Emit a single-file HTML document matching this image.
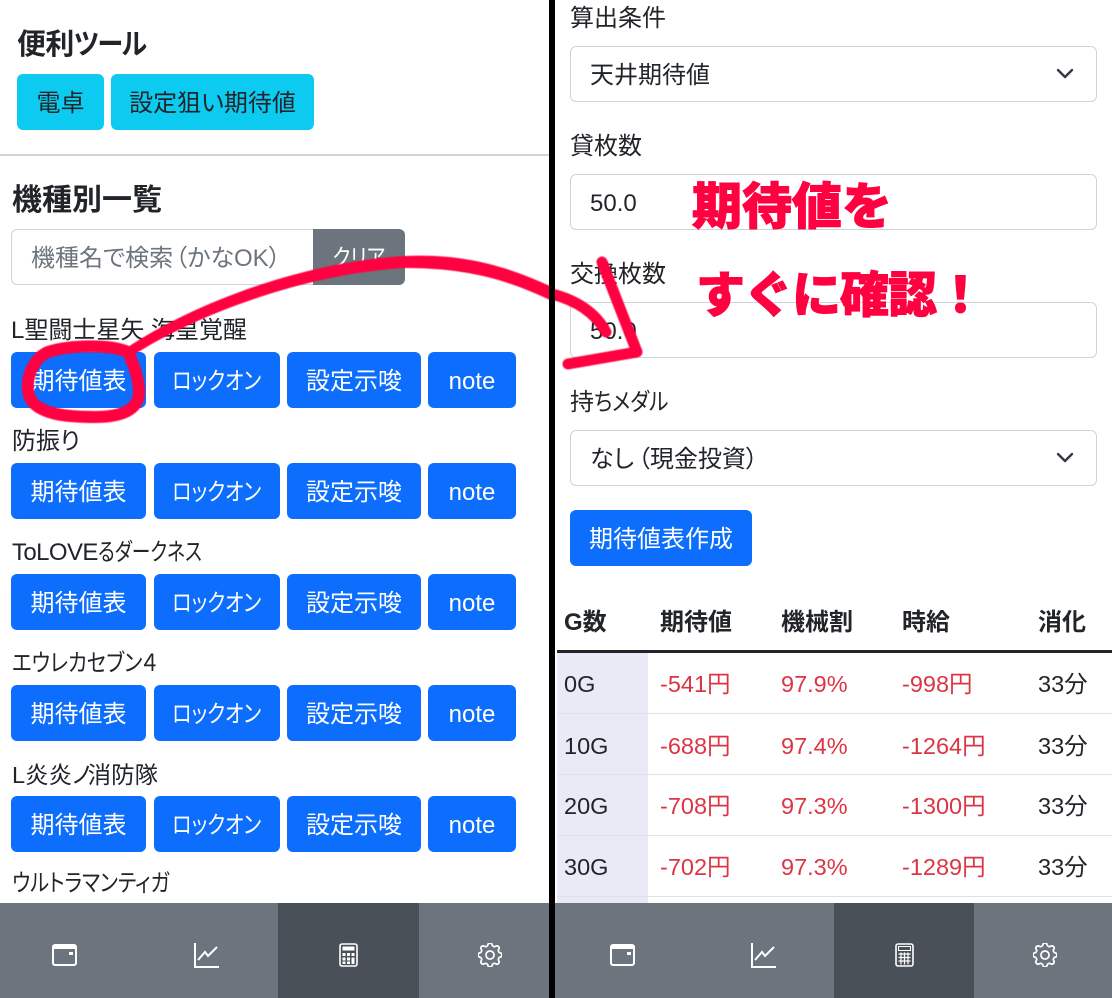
<!DOCTYPE html>
<html lang="ja"><head><meta charset="utf-8"><title>期待値</title>
<style>
html,body{margin:0;padding:0;background:#fff}
body{width:1112px;height:998px;position:relative;overflow:hidden;font-family:"Liberation Sans","Noto Sans CJK JP",sans-serif;color:#212529;font-feature-settings:"palt"}
.a{position:absolute;white-space:nowrap}
.t{position:absolute;white-space:nowrap;font-size:24px;line-height:30px;margin-top:-13px;transform-origin:left center}
.k{display:inline-block;transform:scaleX(.83)}
.kl{display:inline-block;transform:scaleX(.86);transform-origin:left center}
.b{position:absolute;height:56px;line-height:60px;border-radius:6px;text-align:center;background:#0d6efd;color:#fff;font-size:24px}
.c{background:#0dcaf0;color:#212529}
.h{position:absolute;font-size:30px;font-weight:700;line-height:36px;white-space:nowrap}
.f{position:absolute;left:570px;width:525px;height:54px;border:1px solid #ced4da;border-radius:6px;background:#fff;line-height:57px;font-size:24px;text-indent:19px}
.n{position:absolute;top:903px;height:95px}
.gray{background:#6c757d}.dark{background:#495057}
.th{position:absolute;font-weight:700;font-size:24px;line-height:30px;top:608px;white-space:nowrap}
.td{position:absolute;font-size:23.5px;line-height:30px;white-space:nowrap}
.r{color:#dc3545}
.l{position:absolute;left:557px;width:555px;height:1px;background:#dee2e6}
svg{position:absolute}
</style></head><body>

<div class="h" style="left:17px;top:27px;font-size:29px;letter-spacing:-.6px">便利<span style="display:inline-block;letter-spacing:-1.500px;transform:scaleX(.9);transform-origin:left center">ツール</span></div>
<div class="b c" style="left:17px;top:74px;width:87px">電卓</div>
<div class="b c" style="left:111px;top:74px;width:203px">設定狙い期待値</div>
<div class="a" style="left:0;top:154px;width:549px;height:2px;background:#d3d3de"></div>
<div class="h" style="left:12px;top:183px">機種別一覧</div>
<div class="a" style="left:11px;top:229px;height:54px;border:1px solid #ced4da;border-right:0;border-radius:6px 0 0 6px;width:301px;line-height:57px;color:#6c757d;font-size:24px;text-indent:19px">機種名で検索<span style="margin-left:2px">（かなOK）</span></div>
<div class="b" style="left:313px;top:229px;width:92px;background:#6c757d;border-radius:0 6px 6px 0"><span class="k">クリア</span></div>

<div class="t" style="left:11px;top:329px">L聖闘士星矢 海皇覚醒</div>
<div class="b" style="left:11px;top:352px;width:135px">期待値表</div><div class="b" style="left:154px;top:352px;width:126px"><span class="k">ロックオン</span></div><div class="b" style="left:287px;top:352px;width:134px">設定示唆</div><div class="b" style="left:428px;top:352px;width:88px">note</div>
<div class="t" style="left:12px;top:440px">防振り</div>
<div class="b" style="left:11px;top:463px;width:135px">期待値表</div><div class="b" style="left:154px;top:463px;width:126px"><span class="k">ロックオン</span></div><div class="b" style="left:287px;top:463px;width:134px">設定示唆</div><div class="b" style="left:428px;top:463px;width:88px">note</div>
<div class="t" style="left:12px;top:551px"><span style="letter-spacing:-.6px">ToLOVE</span><span style="display:inline-block;transform:scaleX(.78);transform-origin:left center">るダークネス</span></div>
<div class="b" style="left:11px;top:574px;width:135px">期待値表</div><div class="b" style="left:154px;top:574px;width:126px"><span class="k">ロックオン</span></div><div class="b" style="left:287px;top:574px;width:134px">設定示唆</div><div class="b" style="left:428px;top:574px;width:88px">note</div>
<div class="t" style="left:12px;top:662px;transform:scaleX(.85)">エウレカセブン４</div>
<div class="b" style="left:11px;top:685px;width:135px">期待値表</div><div class="b" style="left:154px;top:685px;width:126px"><span class="k">ロックオン</span></div><div class="b" style="left:287px;top:685px;width:134px">設定示唆</div><div class="b" style="left:428px;top:685px;width:88px">note</div>
<div class="t" style="left:12px;top:773px;font-size:23.5px">L炎炎<span style="letter-spacing:-3px">ノ</span>消防隊</div>
<div class="b" style="left:11px;top:796px;width:135px">期待値表</div><div class="b" style="left:154px;top:796px;width:126px"><span class="k">ロックオン</span></div><div class="b" style="left:287px;top:796px;width:134px">設定示唆</div><div class="b" style="left:428px;top:796px;width:88px">note</div>
<div class="t" style="left:12px;top:882px;transform:scaleX(.84)">ウルトラマンティガ</div>

<div class="t" style="left:570px;top:17px">算出条件</div>
<div class="f" style="top:46px">天井期待値</div>
<svg style="left:1055px;top:67px" width="20" height="16" viewBox="0 0 20 16"><path d="M3 3l7 7 7-7" fill="none" stroke="#343a40" stroke-width="2.400" stroke-linecap="round" stroke-linejoin="round"/></svg>
<div class="t" style="left:570px;top:145px">貸枚数</div>
<div class="f" style="top:174px">50.0</div>
<div class="t" style="left:570px;top:273px">交換枚数</div>
<div class="f" style="top:302px">50.0</div>
<div class="t" style="left:570px;top:401px">持<span class="kl">ちメダル</span></div>
<div class="f" style="top:430px">なし<span style="margin-left:4px">（現金投資<span style="margin-right:3px">）</span></span></div>
<svg style="left:1055px;top:451px" width="20" height="16" viewBox="0 0 20 16"><path d="M3 3l7 7 7-7" fill="none" stroke="#343a40" stroke-width="2.400" stroke-linecap="round" stroke-linejoin="round"/></svg>
<div class="b" style="left:570px;top:510px;width:182px">期待値表作成</div>

<div class="th" style="left:564px">G数</div><div class="th" style="left:660px">期待値</div><div class="th" style="left:781px">機械割</div><div class="th" style="left:902px">時給</div><div class="th" style="left:1038px">消化</div>
<div class="a" style="left:557px;top:650px;width:555px;height:3px;background:#212529"></div>
<div class="a" style="left:557px;top:653px;width:91px;height:250px;background:#e9eaf6"></div>
<div class="l" style="top:713px"></div><div class="l" style="top:774px"></div><div class="l" style="top:835px"></div><div class="l" style="top:896px"></div>

<div class="td" style="left:564px;top:669px">0G</div><div class="td r" style="left:660px;top:669px">-541円</div><div class="td r" style="left:781px;top:669px">97.9%</div><div class="td r" style="left:902px;top:669px">-998円</div><div class="td" style="left:1038px;top:669px">33分</div>
<div class="td" style="left:564px;top:731px">10G</div><div class="td r" style="left:660px;top:731px">-688円</div><div class="td r" style="left:781px;top:731px">97.4%</div><div class="td r" style="left:902px;top:731px">-1264円</div><div class="td" style="left:1038px;top:731px">33分</div>
<div class="td" style="left:564px;top:791px">20G</div><div class="td r" style="left:660px;top:791px">-708円</div><div class="td r" style="left:781px;top:791px">97.3%</div><div class="td r" style="left:902px;top:791px">-1300円</div><div class="td" style="left:1038px;top:791px">33分</div>
<div class="td" style="left:564px;top:852px">30G</div><div class="td r" style="left:660px;top:852px">-702円</div><div class="td r" style="left:781px;top:852px">97.3%</div><div class="td r" style="left:902px;top:852px">-1289円</div><div class="td" style="left:1038px;top:852px">33分</div>

<div class="n gray" style="left:0;width:278px"></div>
<div class="n dark" style="left:278px;width:141px"></div>
<div class="n gray" style="left:419px;width:130px"></div>
<div class="n gray" style="left:555px;width:279px"></div>
<div class="n dark" style="left:834px;width:140px"></div>
<div class="n gray" style="left:974px;width:138px"></div>

<svg style="left:52px;top:943px" width="25" height="24" viewBox="0 0 25 24" fill="none" stroke="#fff" stroke-width="2"><rect x="1" y="2" width="23" height="20" rx="2"/><path d="M1 4.500h23" stroke-width="3"/><rect x="17" y="9" width="4" height="3" fill="#fff" stroke="none"/></svg>
<svg style="left:194px;top:943px" width="25" height="25" viewBox="0 0 25 25" fill="none" stroke="#fff"><path d="M1 0v24h24" stroke-width="2"/><path d="M4 17l7-8 3 4 9-9" stroke-width="2"/></svg>
<svg style="left:339px;top:943px" width="19" height="24" viewBox="0 0 19 24" fill="none" stroke="#fff" stroke-width="1.600"><rect x="1" y="1" width="17" height="22" rx="2"/><rect x="3.500" y="3.500" width="12" height="4" fill="#fff" stroke="none"/><g fill="#fff" stroke="none"><rect x="3.500" y="10" width="3" height="3"/><rect x="8" y="10" width="3" height="3"/><rect x="12.500" y="10" width="3" height="3"/><rect x="3.500" y="14.500" width="3" height="3"/><rect x="8" y="14.500" width="3" height="3"/><rect x="12.500" y="14.500" width="3" height="6.500"/><rect x="3.500" y="18.500" width="3" height="2.500"/><rect x="8" y="18.500" width="3" height="2.500"/></g></svg>
<svg style="left:478px;top:943px" width="24" height="24" viewBox="0 0 16 16" fill="none" stroke="#fff" stroke-width="1.150"><circle cx="8" cy="8" r="2.700"/><path d="M9.405 1.050c-.413-1.400-2.397-1.400-2.810 0l-.1.340a1.464 1.464 0 0 1-2.105.872l-.31-.17c-1.283-.698-2.686.705-1.987 1.987l.169.311c.446.820.023 1.841-.872 2.105l-.34.100c-1.400.413-1.400 2.397 0 2.810l.34.100a1.464 1.464 0 0 1 .872 2.105l-.17.310c-.698 1.283.705 2.686 1.987 1.987l.311-.169a1.464 1.464 0 0 1 2.105.872l.1.340c.413 1.400 2.397 1.400 2.810 0l.1-.340a1.464 1.464 0 0 1 2.105-.872l.31.170c1.283.698 2.686-.705 1.987-1.987l-.169-.311a1.464 1.464 0 0 1 .872-2.105l.34-.1c1.400-.413 1.400-2.397 0-2.810l-.34-.1a1.464 1.464 0 0 1-.872-2.105l.17-.310c.698-1.283-.705-2.686-1.987-1.987l-.311.169a1.464 1.464 0 0 1-2.105-.872l-.1-.340z"/></svg>

<svg style="left:610px;top:943px" width="25" height="24" viewBox="0 0 25 24" fill="none" stroke="#fff" stroke-width="2"><rect x="1" y="2" width="23" height="20" rx="2"/><path d="M1 4.500h23" stroke-width="3"/><rect x="17" y="9" width="4" height="3" fill="#fff" stroke="none"/></svg>
<svg style="left:751px;top:943px" width="25" height="25" viewBox="0 0 25 25" fill="none" stroke="#fff"><path d="M1 0v24h24" stroke-width="2"/><path d="M4 17l7-8 3 4 9-9" stroke-width="2"/></svg>
<svg style="left:895px;top:943px" width="19" height="24" viewBox="0 0 19 24" fill="none" stroke="#fff" stroke-width="1.600"><rect x="1" y="1" width="17" height="22" rx="2"/><rect x="3.500" y="3.500" width="12" height="4" fill="none" stroke-width="1"/><path d="M3.500 11h12M3.500 14.500h12M3.500 18h12M6 9.500v12M9.500 9.500v12M13 9.500v12" stroke-width="1.200"/></svg>
<svg style="left:1033px;top:943px" width="24" height="24" viewBox="0 0 16 16" fill="none" stroke="#fff" stroke-width="1.150"><circle cx="8" cy="8" r="2.700"/><path d="M9.405 1.050c-.413-1.400-2.397-1.400-2.810 0l-.1.340a1.464 1.464 0 0 1-2.105.872l-.31-.17c-1.283-.698-2.686.705-1.987 1.987l.169.311c.446.820.023 1.841-.872 2.105l-.34.100c-1.400.413-1.400 2.397 0 2.810l.34.100a1.464 1.464 0 0 1 .872 2.105l-.17.310c-.698 1.283.705 2.686 1.987 1.987l.311-.169a1.464 1.464 0 0 1 2.105.872l.1.340c.413 1.400 2.397 1.400 2.810 0l.1-.340a1.464 1.464 0 0 1 2.105-.872l.31.170c1.283.698 2.686-.705 1.987-1.987l-.169-.311a1.464 1.464 0 0 1 .872-2.105l.34-.1c1.400-.413 1.400-2.397 0-2.810l-.34-.1a1.464 1.464 0 0 1-.872-2.105l.17-.310c.698-1.283-.705-2.686-1.987-1.987l-.311.169a1.464 1.464 0 0 1-2.105-.872l-.1-.340z"/></svg>

<svg style="left:0;top:0;filter:blur(.5px)" width="1112" height="998" viewBox="0 0 1112 998" fill="none" stroke="#ff0040" stroke-linecap="round" stroke-linejoin="round">
<path d="M128 352C110 344 70 345 48 352C30 360 24 385 30 398C38 414 65 417 95 417C125 417 140 408 139 390C138 372 130 358 128 352" stroke-width="12"/>
<path d="M125 349C190 305 300 262 405 256C470 253 515 270 552 287L552 301C510 281 470 268 405 268C300 274 190 318 132 356Z" fill="#ff0040" stroke="none"/>
<path d="M552 294C575 300 595 312 606 332" stroke-width="11"/>
<path d="M602 262L637 352L568 364" stroke-width="11"/>
</svg>

<div class="a" style="left:549px;top:0;width:6px;height:998px;background:#000"></div>

<div class="a" style="left:692px;top:179px;font-size:50px;line-height:56px;font-weight:900;color:#ff0040;-webkit-text-stroke:1px #ff0040;font-feature-settings:normal">期待値を</div>
<div class="a" style="left:696px;top:268px;font-size:49px;line-height:56px;font-weight:900;color:#ff0040;-webkit-text-stroke:1px #ff0040;letter-spacing:-1px;font-feature-settings:normal">すぐに確認！</div>

</body></html>
